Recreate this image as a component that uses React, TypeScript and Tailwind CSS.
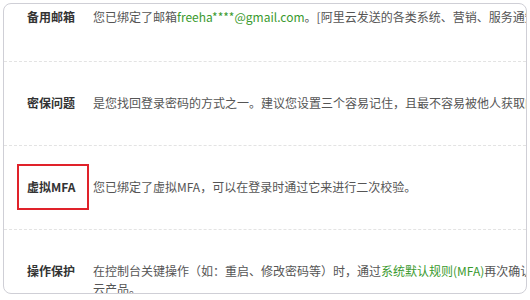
const font = { fontFamily: '"Noto Sans CJK SC", "Liberation Sans", sans-serif' }

function Row({ label, children, first, last, marked }: { label: string; children: React.ReactNode; first?: boolean; last?: boolean; marked?: boolean }) {
  return (
    <div
      className={`flex pt-[32px] ${first ? '-mt-[28px] pb-[35px]' : 'pb-[33px]'} ${last ? '' : 'border-b border-dashed border-[#e3e3e3]'}`}
    >
      <div className="relative w-[89px] shrink-0 pl-[23px] text-[12px] leading-[18px] font-bold text-[#333]">
        {label}
        {marked && <div className="absolute left-[13px] -top-[14px] w-[72px] h-[46px] border-2 border-[#e0222a]" />}
      </div>
      <div className="w-[640px] shrink-0 text-[12px] leading-[18px] text-[#555]">{children}</div>
    </div>
  )
}

export default function App() {
  return (
    <div className="w-[530px] h-[300px] bg-white pt-[3px] pl-[3px]" style={font}>
      <div className="w-[524px] h-[291px] border border-[#cfcfd6] rounded-[8px] overflow-hidden">
        <Row label="备用邮箱" first>
          <span className="whitespace-nowrap">
            您已绑定了邮箱<span className="text-[#3a9a2e]">freeha****@gmail.com</span>。[阿里云发送的各类系统、营销、服务通知将发送到您的备用邮箱。]
          </span>
        </Row>
        <Row label="密保问题">
          <span className="whitespace-nowrap">是您找回登录密码的方式之一。建议您设置三个容易记住，且最不容易被他人获取的问题及答案。</span>
        </Row>
        <Row label="虚拟MFA" marked>
          您已绑定了虚拟MFA，可以在登录时通过它来进行二次校验。
        </Row>
        <Row label="操作保护" last>
          <span className="whitespace-nowrap">
            在控制台关键操作（如：重启、修改密码等）时，通过<span className="text-[#3a9a2e]">系统默认规则(MFA)</span>再次确认您的身份，保护您的账号和
          </span>
          <br />
          云产品。
        </Row>
      </div>
    </div>
  )
}
